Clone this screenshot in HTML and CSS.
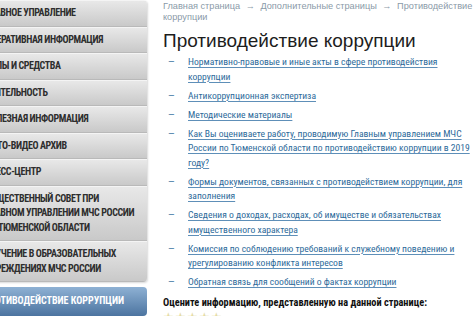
FILE: index.html
```html
<!DOCTYPE html>
<html lang="ru">

<head>
    <meta charset="UTF-8">
    <meta name="viewport" content="width=device-width, initial-scale=1.0">
    <title>Противодействие коррупции</title>
    <link rel="stylesheet" href="styles.css">
</head>

<body>

    <div class="page">
        <div class="sidebar">
            <ul class="menu">
                <li>Главное управление</li>
                <li>Оперативная информация</li>
                <li>Силы и средства</li>
                <li>Деятельность</li>
                <li>Полезная информация</li>
                <li>Фото-видео архив</li>
                <li>Пресс-центр</li>
                <li>Общественный совет при главном управлении МЧС России по Тюменской области</li>
                <li>Обучение в образовательных учреждениях МЧС России</li>
            </ul>
            <div class="menu-active">Противодействие коррупции</div>
        </div>

        <div class="content">
            <div class="breadcrumbs">
                Главная страница <span class="arrow">→</span> Дополнительные страницы <span class="arrow">→</span> Противодействие коррупции
            </div>

            <h1>Противодействие коррупции</h1>

            <ul class="links">
                <li><a href="#">Нормативно-правовые и иные акты в сфере противодействия коррупции</a></li>
                <li><a href="#">Антикоррупционная экспертиза</a></li>
                <li><a href="#">Методические материалы</a></li>
                <li><a href="#">Как Вы оцениваете работу, проводимую Главным управлением МЧС России по Тюменской области по противодействию коррупции в 2019 году?</a></li>
                <li><a href="#">Формы документов, связанных с противодействием коррупции, для заполнения</a></li>
                <li><a href="#">Сведения о доходах, расходах, об имуществе и обязательствах имущественного характера</a></li>
                <li><a href="#">Комиссия по соблюдению требований к служебному поведению и урегулированию конфликта интересов</a></li>
                <li><a href="#">Обратная связь для сообщений о фактах коррупции</a></li>
            </ul>

            <div class="rating-title">Оцените информацию, представленную на данной странице:</div>
            <div class="stars">
                <span>★</span><span>★</span><span>★</span><span>★</span><span>★</span>
            </div>
        </div>
    </div>

</body>

</html>
```

FILE: styles.css
```css
body {
    font-family: "Roboto Condensed", Roboto, "Liberation Sans", Arial, sans-serif;
    margin: 0;
    padding: 0;
    background-color: #fff;
    overflow: hidden;
}

.page {
    display: flex;
    align-items: flex-start;
}

/* left menu, its start is scrolled off the window */
.sidebar {
    flex: none;
    width: 175px;
    margin-left: -28px;
}

.menu {
    list-style: none;
    margin: 0;
    padding: 0;
    border-radius: 4px;
    overflow: hidden;
    box-shadow: 1px 1px 2px rgba(0, 0, 0, 0.15);
}

.menu li,
.menu-active {
    font-weight: bold;
    font-size: 10px;
    line-height: 14.5px;
    letter-spacing: -0.4px;
    text-transform: uppercase;
    color: #2e2e2e;
    padding: 5px 8px 5px 13px;
    background: linear-gradient(to bottom, #e8e8e8, #c9c9c9);
    border-top: 1px solid #f4f4f4;
    border-bottom: 1px solid #b9b9b9;
}

.menu-active {
    margin-top: 5px;
    color: #fff;
    letter-spacing: 0;
    border-radius: 4px;
    border: none;
    padding: 7px 8px 7px 11px;
    background: linear-gradient(to bottom, #8eb1d4, #4c74a0);
}

.content {
    flex: 1;
    padding: 1px 1px 0 16px;
}

.breadcrumbs {
    font-family: "Liberation Sans", Arial, sans-serif;
    font-size: 9.2px;
    line-height: 11px;
    color: #8a9aa8;
}

.arrow {
    margin: 0 3px;
}

h1 {
    font-family: "Liberation Sans", Arial, sans-serif;
    font-weight: normal;
    font-size: 19px;
    line-height: 24px;
    color: #1d1d1d;
    margin: 6px 0 2px;
}

.links {
    list-style: none;
    margin: 0;
    padding: 0 0 0 5px;
}

.links li {
    display: flex;
    font-size: 9.6px;
    line-height: 14.5px;
    margin-bottom: 4.5px;
}

.links li::before {
    content: "—";
    flex: none;
    width: 20px;
    color: #2d6a9a;
}

.links a {
    color: #2d6a9a;
    text-decoration: underline;
    text-decoration-color: #5e8fb8;
    text-underline-offset: 2px;
}

.rating-title {
    font-weight: bold;
    font-size: 10.3px;
    color: #111;
    margin-top: 6px;
}

.stars {
    font-size: 12px;
    color: #e6dca6;
    margin-top: 1px;
    letter-spacing: 1px;
}
```
